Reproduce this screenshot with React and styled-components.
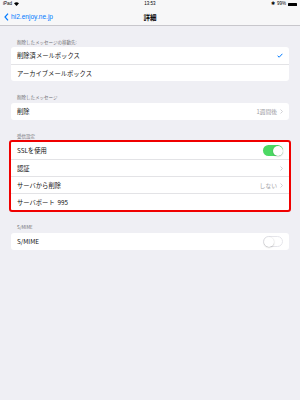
import React from 'react';
import styled, { createGlobalStyle } from 'styled-components';

const GlobalStyle = createGlobalStyle`
  html, body {
    margin: 0;
    padding: 0;
    background: #EFEFF4;
  }
  body {
    font-family: "Noto Sans CJK JP", "Liberation Sans", sans-serif;
    color: #000;
  }
`;

const Page = styled.div`
  width: 300px;
  height: 400px;
  background: #EFEFF4;
  overflow: hidden;
`;

const Header = styled.div`
  background: #F7F7F8;
  border-bottom: 1px solid #C8C7CC;
`;

const StatusBar = styled.div`
  height: 8px;
  display: grid;
  grid-template-columns: 1fr auto 1fr;
  align-items: center;
  padding: 0 3px;
  font-family: "Liberation Sans", sans-serif;
  font-size: 4.5px;
  line-height: 8px;
`;

const StatusLeft = styled.div`
  display: flex;
  align-items: center;
  gap: 2px;
`;

const StatusRight = styled.div`
  display: flex;
  align-items: center;
  justify-content: flex-end;
  gap: 2px;
`;

const Battery = styled.div`
  width: 9px;
  height: 3px;
  background: #000;
  border-radius: 0.5px;
`;

const NavBar = styled.div`
  height: 17px;
  display: grid;
  grid-template-columns: 1fr auto 1fr;
  align-items: center;
  padding: 0 4px;
`;

const Back = styled.div`
  display: flex;
  align-items: center;
  gap: 2px;
  color: #007AFF;
  font-family: "Liberation Sans", sans-serif;
  font-size: 6.6px;
`;

const Title = styled.div`
  font-size: 6.5px;
  font-weight: 700;
`;

const Content = styled.div`
  padding: 0 11px;
`;

const SectionLabel = styled.div`
  font-size: 4.5px;
  color: #6D6D72;
  padding: ${p => p.$top}px 6px 0;
  height: ${p => p.$h}px;
  box-sizing: border-box;
  line-height: 6px;
`;

const Group = styled.div`
  background: #fff;
  border-radius: 3px;
  overflow: hidden;
  ${p => p.$highlight && `
    outline: 2px solid #F00000;
    outline-offset: 0px;
    border-radius: 1px;
  `}
`;

const Row = styled.div`
  height: 17px;
  display: flex;
  align-items: center;
  justify-content: space-between;
  padding: 0 6px;
  box-sizing: border-box;
  border-top: ${p => (p.$first ? 'none' : '1.5px solid #E3E3E6')};
`;

const Label = styled.div`
  font-size: 6.3px;
  color: #111;
  white-space: pre;
`;

const Trail = styled.div`
  display: flex;
  align-items: center;
  gap: 3px;
  font-size: 5.8px;
  color: #A0A0A5;
`;

const Toggle = styled.div`
  width: 20px;
  height: 11px;
  border-radius: 6px;
  box-sizing: border-box;
  position: relative;
  background: ${p => (p.$on ? '#4CD964' : '#fff')};
  border: ${p => (p.$on ? 'none' : '1px solid #E5E5EA')};
  &::after {
    content: '';
    position: absolute;
    top: ${p => (p.$on ? '0.5px' : '-0.5px')};
    ${p => (p.$on ? 'right: 0.5px;' : 'left: -0.5px;')}
    width: 10px;
    height: 10px;
    border-radius: 50%;
    background: #fff;
    box-shadow: 0 0.5px 1.5px rgba(0,0,0,0.3);
  }
`;

const Chevron = () => (
  <svg width="3" height="5" viewBox="0 0 3 5">
    <path d="M0.5 0.5 L2.5 2.5 L0.5 4.5" fill="none" stroke="#C7C7CC" strokeWidth="0.8" />
  </svg>
);

const Check = () => (
  <svg width="6" height="5" viewBox="0 0 6 5">
    <path d="M0.6 2.8 L2.2 4.2 L5.4 0.8" fill="none" stroke="#007AFF" strokeWidth="1" />
  </svg>
);

const Wifi = () => (
  <svg width="5" height="4" viewBox="0 0 10 8">
    <path d="M5 8 L0 2.5 Q5 -1.5 10 2.5 Z" fill="#000" />
  </svg>
);

const BackChevron = () => (
  <svg width="5" height="8" viewBox="0 0 5 8">
    <path d="M4 0.7 L1 4 L4 7.3" fill="none" stroke="#007AFF" strokeWidth="1.2" />
  </svg>
);

export default function App() {
  return (
    <Page>
      <GlobalStyle />
      <Header>
        <StatusBar>
          <StatusLeft>iPad <Wifi /></StatusLeft>
          <div>13:53</div>
          <StatusRight>
            <span>✱</span>
            <span>99%</span>
            <Battery />
          </StatusRight>
        </StatusBar>
        <NavBar>
          <Back><BackChevron />hi2.enjoy.ne.jp</Back>
          <Title>詳細</Title>
          <div />
        </NavBar>
      </Header>
      <Content>
        <SectionLabel $top={13} $h={21}>削除したメッセージの移動先:</SectionLabel>
        <Group>
          <Row $first>
            <Label>削除済メールボックス</Label>
            <Check />
          </Row>
          <Row>
            <Label>アーカイブメールボックス</Label>
          </Row>
        </Group>
        <SectionLabel $top={13} $h={22}>削除したメッセージ</SectionLabel>
        <Group>
          <Row $first>
            <Label>削除</Label>
            <Trail>1週間後 <Chevron /></Trail>
          </Row>
        </Group>
        <SectionLabel $top={13} $h={22}>受信設定</SectionLabel>
        <Group $highlight>
          <Row $first>
            <Label>SSLを使用</Label>
            <Toggle $on />
          </Row>
          <Row>
            <Label>認証</Label>
            <Trail><Chevron /></Trail>
          </Row>
          <Row>
            <Label>サーバから削除</Label>
            <Trail>しない <Chevron /></Trail>
          </Row>
          <Row>
            <Label>{'サーバポート  995'}</Label>
          </Row>
        </Group>
        <SectionLabel $top={14} $h={23}>S/MIME</SectionLabel>
        <Group>
          <Row $first>
            <Label>S/MIME</Label>
            <Toggle />
          </Row>
        </Group>
      </Content>
    </Page>
  );
}
